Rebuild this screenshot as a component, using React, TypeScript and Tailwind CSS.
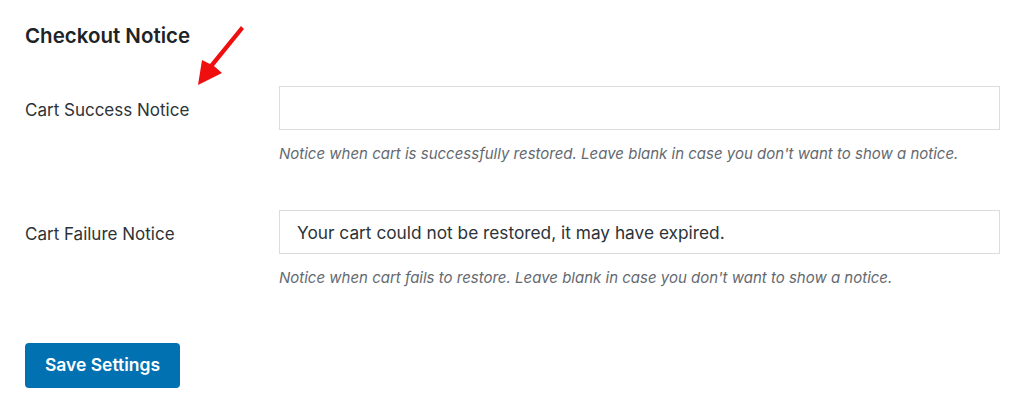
export default function App() {
  const font = { fontFamily: 'Inter, "Liberation Sans", Arial, sans-serif' };
  return (
    <div className="relative w-[1024px] h-[419px] bg-white text-[#1d2327] overflow-hidden" style={font}>
      <div className="pl-[25px] pt-[22px]">
        <h2 className="text-[20.5px] leading-[28px] font-semibold">Checkout Notice</h2>

        {/* row 1 */}
        <div className="flex mt-[36px]">
          <label className="w-[254px] shrink-0 text-[17px] leading-[44px] pt-[2px] text-[#2c3338]">Cart Success Notice</label>
          <div className="w-[721px]">
            <input
              type="text"
              className="w-full h-[44px] border border-[#dcdcde] bg-white px-[17px] text-[17.3px] outline-none"
            />
            <p className="mt-[14px] text-[15px] italic text-[#646970] leading-[19px]">
              Notice when cart is successfully restored. Leave blank in case you don't want to show a notice.
            </p>
          </div>
        </div>

        {/* row 2 */}
        <div className="flex mt-[47px]">
          <label className="w-[254px] shrink-0 text-[17px] leading-[44px] pt-[2px] text-[#2c3338]">Cart Failure Notice</label>
          <div className="w-[721px]">
            <input
              type="text"
              defaultValue="Your cart could not be restored, it may have expired."
              className="w-full h-[44px] border border-[#dcdcde] bg-white px-[17px] text-[17.3px] text-[#2c3338] outline-none"
            />
            <p className="mt-[14px] text-[15px] italic text-[#646970] leading-[19px]">
              Notice when cart fails to restore. Leave blank in case you don't want to show a notice.
            </p>
          </div>
        </div>

        <button className="mt-[56px] w-[155px] h-[45px] rounded-[4px] bg-[#0271b1] text-white text-[17.5px] font-semibold">
          Save Settings
        </button>
      </div>

      {/* red annotation arrow */}
      <svg className="absolute left-0 top-0" width="1024" height="419" viewBox="0 0 1024 419">
        <path d="M241 26 L244 29 L214 66 L222 73 L198 85 L202 60 L210 64 Z" fill="#f00f0f" />
      </svg>
    </div>
  );
}
